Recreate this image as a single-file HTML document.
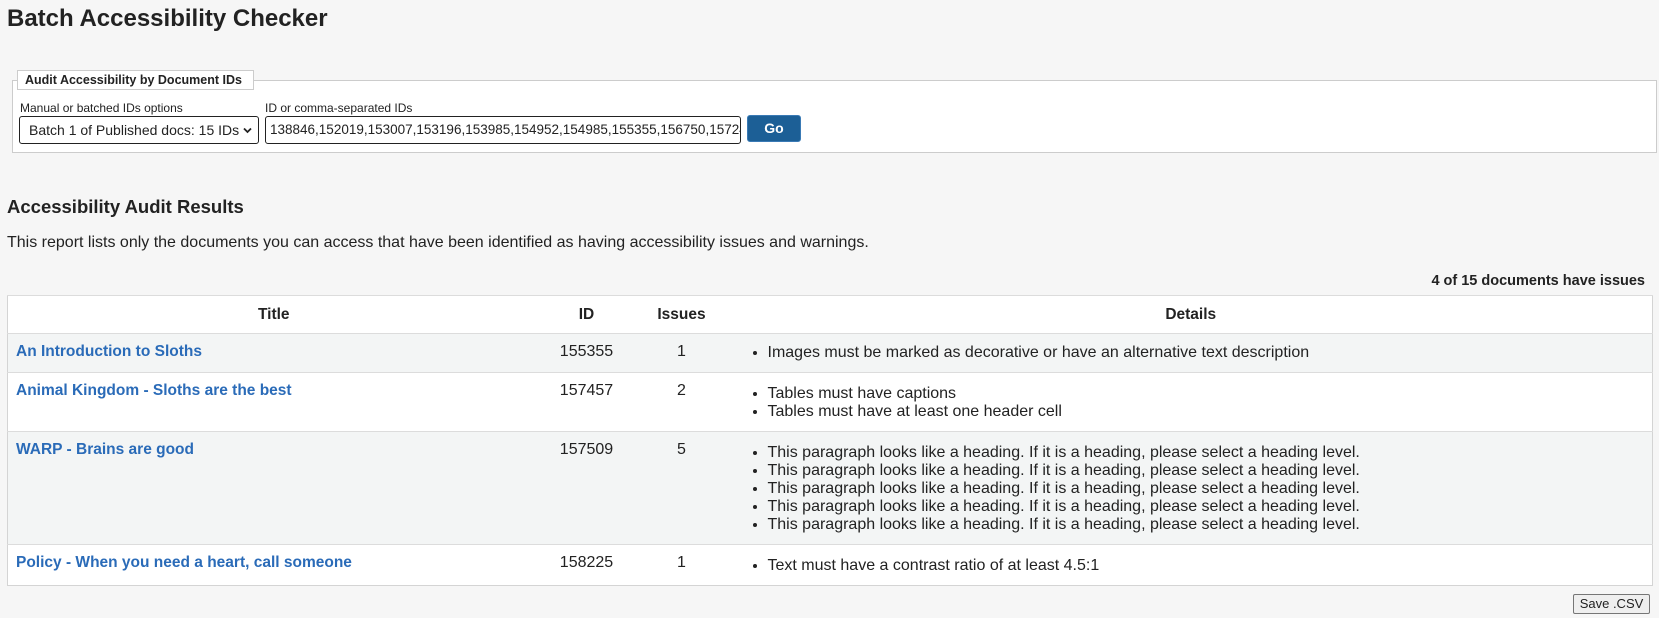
<!DOCTYPE html>
<html><head><meta charset="utf-8"><style>
body{margin:0;background:#f6f6f6;font-family:"Liberation Sans",Arial,sans-serif;color:#222;width:1659px;height:618px;overflow:hidden;position:relative}
.a{position:absolute}
h1{position:absolute;left:7px;top:5px;margin:0;font-size:24px;font-weight:bold}
.fs{left:12px;top:80px;width:1645px;height:73px;border:1px solid #ccc;background:#fff;box-sizing:border-box}
.lg{left:17px;top:70px;height:20px;width:237px;border:1px solid #ccc;background:#fff;font-size:12.5px;font-weight:bold;line-height:19px;padding-left:7px;box-sizing:border-box}
.lb{font-size:12px;top:101px}
.sel{left:19px;top:116px;width:240px;height:28px;border:1px solid #222;border-radius:3px;background:#fff;box-sizing:border-box;font-size:14px;line-height:26px;padding-left:9px}
.inp{left:265px;top:116px;width:476px;height:28px;border:1px solid #222;border-radius:3px;background:#fff;box-sizing:border-box;font-size:13.5px;line-height:26px;padding-left:4px;overflow:hidden;white-space:nowrap}
.go{left:747px;top:115px;width:54px;height:27px;background:#1c5f96;border:1px solid #3a7ab5;border-radius:3px;box-sizing:border-box;color:#fff;font-weight:bold;font-size:14px;text-align:center;line-height:25px}
h3{position:absolute;left:7px;top:196px;margin:0;font-size:18.5px;font-weight:bold}
table{position:absolute;left:7px;top:295px;width:1646px;border-collapse:collapse;border:1px solid #d4d4d4;font-size:16px}
td,th{padding:0;vertical-align:top;border-top:1px solid #dcdcdc}
th{height:37px;vertical-align:middle;font-size:15.5px;background:#fff}
tr.g td{background:#f3f5f5} tr.w td{background:#fff}
td.t{padding:9px 8px 0;font-weight:bold;color:#2a6bb8;font-size:15.5px}
td.c{text-align:center;padding-top:9px}
ul{margin:12px 0 10px;padding-left:38px;line-height:18px}
</style></head><body>
<h1>Batch Accessibility Checker</h1>
<div class="a fs"></div>
<div class="a lg">Audit Accessibility by Document IDs</div>
<div class="a lb" style="left:20px">Manual or batched IDs options</div>
<div class="a lb" style="left:265px">ID or comma-separated IDs</div>
<div class="a sel">Batch 1 of Published docs: 15 IDs<svg style="position:absolute;right:6px;top:10px" width="9" height="7" viewBox="0 0 9 7"><path d="M1 1.5L4.5 5L8 1.5" fill="none" stroke="#222" stroke-width="1.8"/></svg></div>
<div class="a inp">138846,152019,153007,153196,153985,154952,154985,155355,156750,157245</div>
<div class="a go">Go</div>
<h3>Accessibility Audit Results</h3>
<div class="a" style="left:7px;top:234px;font-size:16px">This report lists only the documents you can access that have been identified as having accessibility issues and warnings.</div>
<div class="a" style="right:14px;top:273px;font-size:14.5px;font-weight:bold">4 of 15 documents have issues</div>
<table>
<colgroup><col style="width:532px"><col style="width:94px"><col style="width:96px"><col></colgroup>
<tr class="w"><th>Title</th><th>ID</th><th>Issues</th><th>Details</th></tr>
<tr class="g" style="height:39px"><td class="t">An Introduction to Sloths</td><td class="c">155355</td><td class="c">1</td><td><ul style="margin-top:10px"><li>Images must be marked as decorative or have an alternative text description</li></ul></td></tr>
<tr class="w" style="height:59px"><td class="t">Animal Kingdom - Sloths are the best</td><td class="c">157457</td><td class="c">2</td><td><ul><li>Tables must have captions</li><li>Tables must have at least one header cell</li></ul></td></tr>
<tr class="g" style="height:112px"><td class="t">WARP - Brains are good</td><td class="c">157509</td><td class="c">5</td><td><ul><li>This paragraph looks like a heading. If it is a heading, please select a heading level.</li><li>This paragraph looks like a heading. If it is a heading, please select a heading level.</li><li>This paragraph looks like a heading. If it is a heading, please select a heading level.</li><li>This paragraph looks like a heading. If it is a heading, please select a heading level.</li><li>This paragraph looks like a heading. If it is a heading, please select a heading level.</li></ul></td></tr>
<tr class="w" style="height:40px"><td class="t">Policy - When you need a heart, call someone</td><td class="c">158225</td><td class="c">1</td><td><ul style="margin-top:12px"><li>Text must have a contrast ratio of at least 4.5:1</li></ul></td></tr>
</table>
<div class="a" style="left:1573px;top:594px;width:77px;height:20px;border:1px solid #767676;border-radius:2px;background:#efefef;box-sizing:border-box;font-size:13px;text-align:center;line-height:18px">Save .CSV</div>
</body></html>
